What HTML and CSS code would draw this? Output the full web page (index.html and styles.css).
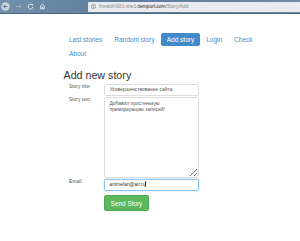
FILE: index.html
```html
<!DOCTYPE html>
<html>
<head>
  <meta charset="UTF-8" />
  <meta name="viewport" content="width=device-width, initial-scale=1.0"/>
  <title>Add story</title>
  <link rel="stylesheet" href="styles.css">
</head>
<body>

  <div class="browserbar">
    <div class="tools">
      <svg class="back" width="9" height="9" viewBox="0 0 9 9">
        <circle cx="4.5" cy="4.5" r="4.2" fill="#c9d3dc"/>
        <path d="M6.5 4.5H2.6M4.3 2.8L2.6 4.5L4.3 6.2" stroke="#5d7690" stroke-width="1" fill="none"/>
      </svg>
      <svg width="7" height="7" viewBox="0 0 7 7">
        <path d="M1 3.5H6M4 1.5L6 3.5L4 5.5" stroke="#9fb3c6" stroke-width="0.9" fill="none"/>
      </svg>
      <svg width="7" height="7" viewBox="0 0 7 7">
        <path d="M5.6 2.4A2.4 2.4 0 1 0 5.9 4" stroke="#e6ecf2" stroke-width="1" fill="none"/>
        <path d="M4.3 1.2L6 1.2L6 2.9Z" fill="#e6ecf2"/>
      </svg>
      <svg width="7" height="7" viewBox="0 0 7 7">
        <path d="M1 3.6L3.5 1.2L6 3.6M1.8 3V6H3V4.5H4V6H5.2V3" stroke="#e6ecf2" stroke-width="0.9" fill="none"/>
      </svg>
    </div>
    <div class="address">
      <svg width="5" height="5" viewBox="0 0 5 5">
        <circle cx="2.5" cy="2.5" r="2.1" stroke="#777" stroke-width="0.6" fill="none"/>
        <path d="M2.5 2.2V3.8M2.5 1.2V1.7" stroke="#777" stroke-width="0.6"/>
      </svg>
      <span>firewolf-001-site1.<b>itempurl.com</b>/Story/Add</span>
    </div>
  </div>

  <div class="container">
    <ul class="nav-pills">
      <li><a href="#">Last stories</a></li>
      <li><a href="#">Random story</a></li>
      <li class="active"><a href="#">Add story</a></li>
      <li><a href="#">Login</a></li>
      <li><a href="#">Check</a></li>
      <li><a href="#">About</a></li>
    </ul>

    <h3>Add new story</h3>

    <form class="story-form">
      <label for="title">Story title:</label>
      <input type="text" id="title" value="Усовершенствование сайта">

      <label for="text">Story text:</label>
      <textarea id="text">Добавил простенькую премодерацию записей!</textarea>

      <label for="email">Email:</label>
      <div class="field focused">animefan@air.ru<span class="caret"></span></div>

      <span></span>
      <div><button type="submit">Send Story</button></div>
    </form>
  </div>

</body>
</html>
```

FILE: styles.css
```css
body {
  margin: 0;
  font-family: "Liberation Sans", Arial, sans-serif;
  background: #fff;
  color: #333;
}

.browserbar {
  height: 14px;
  display: flex;
  align-items: center;
  background: linear-gradient(90deg, #7390aa 0%, #5b7c9d 40%, #6383a2 70%, #6f8da9 100%);
  border-bottom: 1px solid #4e6a86;
  box-sizing: border-box;
}

.tools {
  width: 87px;
  display: flex;
  align-items: center;
  gap: 4px;
  padding-left: 1px;
}

.tools svg {
  display: block;
  margin-right: 1px;
}

.address {
  flex: 1;
  height: 10px;
  display: flex;
  align-items: center;
  gap: 3px;
  padding-left: 3px;
  background: #e9ebee;
  border-radius: 1px 0 0 1px;
  font-size: 4.9px;
  color: #8a8a8a;
}

.address b {
  font-weight: normal;
  color: #222;
}

.container {
  padding-left: 63.5px;
}

.nav-pills {
  list-style: none;
  margin: 18.5px 0 0 0;
  padding: 0;
  width: 205px;
  display: flex;
  flex-wrap: wrap;
  gap: 1px 1px;
}

.nav-pills a {
  display: block;
  padding: 2px 5.5px;
  line-height: 9px;
  font-size: 6.5px;
  color: #428bca;
  text-decoration: none;
  border-radius: 2px;
}

.nav-pills .active a {
  background: #428bca;
  color: #fff;
}

h3 {
  margin: 9.5px 0 2.5px 0;
  font-size: 10.7px;
  font-weight: normal;
  line-height: 12px;
  color: #333;
}

.story-form {
  display: grid;
  grid-template-columns: 40.5px 95px;
  row-gap: 1px;
  align-items: start;
}

.story-form label {
  padding: 0.5px 0 0 5.5px;
  font-size: 4.9px;
  line-height: 5px;
  color: #555;
}

.story-form input,
.story-form textarea,
.field {
  width: 95px;
  box-sizing: border-box;
  margin: 0;
  border: 1px solid #ddd;
  border-radius: 1.5px;
  background: #fff;
  padding: 0 4.5px;
  font-family: "Liberation Sans", Arial, sans-serif;
  font-size: 4.9px;
  color: #555;
  outline: none;
}

.story-form input {
  height: 12px;
}

.story-form textarea {
  height: 81px;
  padding-top: 3px;
  line-height: 6px;
  resize: vertical;
}

.field {
  height: 12px;
  line-height: 10px;
  color: #333;
}

.field.focused {
  border-color: #8cc3ee;
  box-shadow: 0 0 2px rgba(102, 175, 233, 0.5);
}

.caret {
  display: inline-block;
  width: 0.5px;
  height: 6px;
  background: #333;
  vertical-align: -1px;
}

button {
  width: 45px;
  height: 16.5px;
  padding: 0;
  border: 0.5px solid #4cae4c;
  border-radius: 2px;
  background: #5cb85c;
  color: #fff;
  font-family: "Liberation Sans", Arial, sans-serif;
  font-size: 6.4px;
  cursor: pointer;
}
```
